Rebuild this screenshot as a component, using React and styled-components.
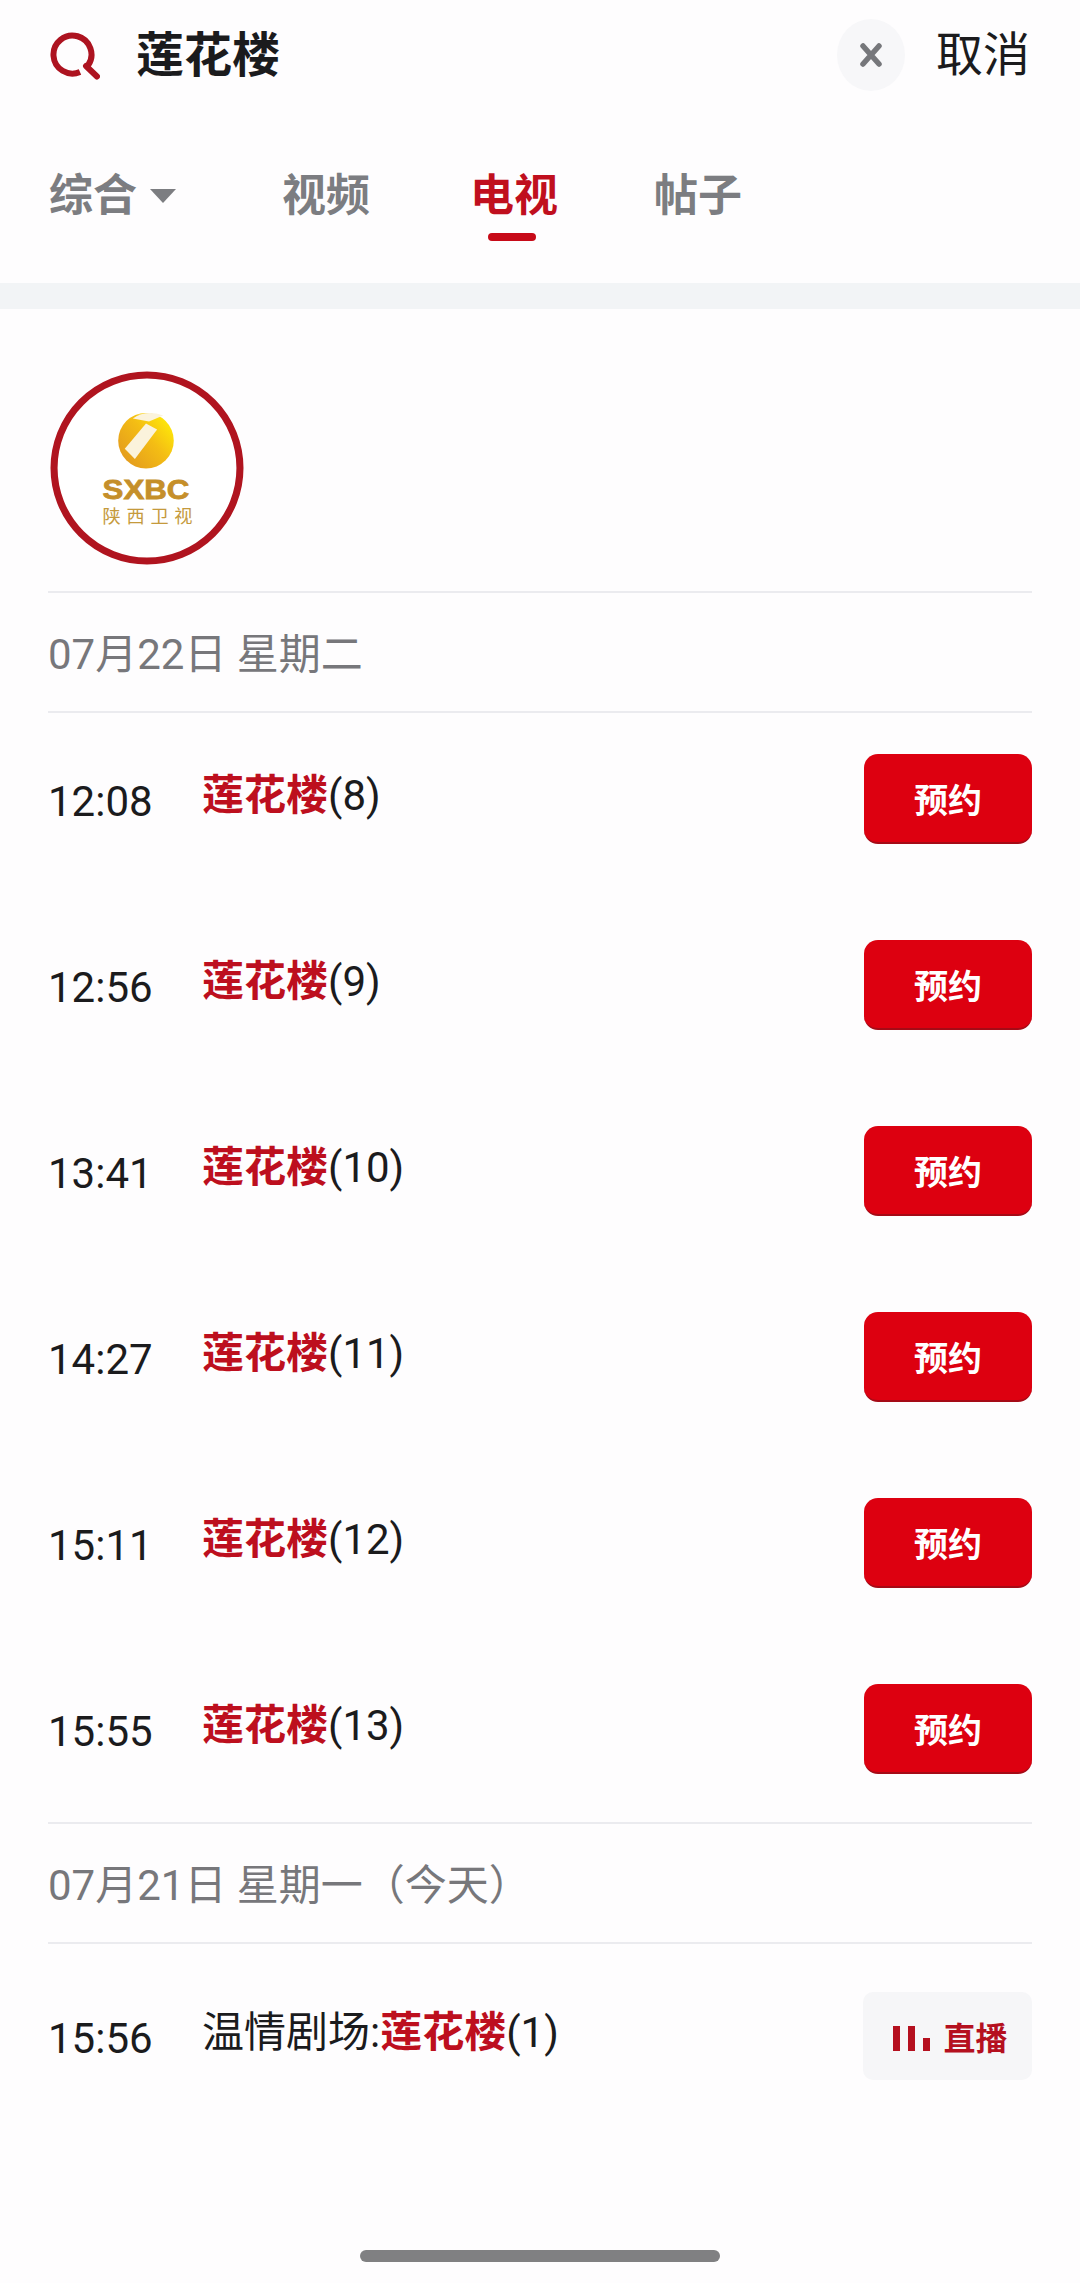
import React from "react";
import styled, { createGlobalStyle } from "styled-components";

const Global = createGlobalStyle`
  html, body { margin: 0; padding: 0; background: #fefdfe; }
  body { font-family: Roboto, "Noto Sans CJK SC", sans-serif; }
`;

const Page = styled.div`
  width: 1080px;
  height: 2283px;
  overflow: hidden;
  display: flex;
  flex-direction: column;
  background: #fefdfe;
`;

const SearchBar = styled.header`
  height: 110px;
  display: flex;
  align-items: center;
  padding: 0 50px;
`;

const SearchIcon = styled.svg`
  width: 50px;
  height: 50px;
  flex: none;
`;

const Query = styled.div`
  margin-left: 36px;
  font-size: 48px;
  line-height: 56px;
  margin-top: 2px;
  font-weight: 700;
  color: #1b1b1d;
  flex: 1;
`;

const ClearButton = styled.div`
  width: 68px;
  height: 72px;
  margin-left: -2px;
  border-radius: 50%;
  background: #f7f7f9;
  display: flex;
  align-items: center;
  justify-content: center;
`;

const Cancel = styled.div`
  margin-left: 31px;
  font-size: 47px;
  line-height: 56px;
  color: #1b1b1d;
`;

const Tabs = styled.nav`
  height: 173px;
  display: flex;
  align-items: flex-start;
  padding: 59px 0 0 49px;
  box-sizing: border-box;
`;

const Tab = styled.div`
  position: relative;
  width: ${(p) => p.$w}px;
  flex: none;
  display: flex;
  align-items: center;
  font-size: 44px;
  line-height: 54px;
  font-weight: 700;
  color: ${(p) => (p.$active ? "#c00f1e" : "#7c7d81")};
`;

const Caret = styled.span`
  margin-left: 13px;
  width: 0;
  height: 0;
  border-left: 13px solid transparent;
  border-right: 13px solid transparent;
  border-top: 14px solid #7c7d81;
`;

const Indicator = styled.span`
  position: absolute;
  left: 18px;
  top: 64px;
  width: 48px;
  height: 8px;
  border-radius: 4px;
  background: #c70a18;
`;

const Band = styled.div`
  height: 26px;
  background: #f2f4f6;
`;

const Content = styled.main`
  flex: 1;
  padding: 0 48px;
  display: flex;
  flex-direction: column;
`;

const LogoRow = styled.div`
  padding: 62px 0 26px 2px;
  border-bottom: 2px solid #ebebef;
`;

const Logo = styled.svg`
  display: block;
  width: 194px;
  height: 194px;
`;

const DateRow = styled.div`
  height: 120px;
  box-sizing: border-box;
  display: flex;
  align-items: center;
  padding-bottom: 4px;
  font-size: 42px;
  color: #77777b;
  border-bottom: 2px solid #ebebef;
`;

const Schedule = styled.div`
  display: flex;
  flex-direction: column;
  gap: 96px;
  padding: ${(p) => p.$top}px 0 ${(p) => p.$bottom}px;
  border-bottom: ${(p) => (p.$line ? "2px solid #ebebef" : "none")};
`;

const Row = styled.div`
  height: ${(p) => p.$h || 90}px;
  display: flex;
  align-items: center;
`;

const Time = styled.div`
  width: 155px;
  flex: none;
  font-size: 42px;
  line-height: 50px;
  margin-top: 6px;
  color: #1b1b1d;
`;

const Title = styled.div`
  flex: 1;
  font-size: 42px;
  line-height: 50px;
  margin-top: -7px;
  margin-left: -1px;
  color: #1b1b1d;
`;

const Mark = styled.span`
  font-weight: 700;
  color: #bd0f1e;
`;

const BookButton = styled.div`
  width: 168px;
  height: 90px;
  box-sizing: border-box;
  border-radius: 14px;
  background: #dd0010;
  border-bottom: 2px solid #a50a16;
  color: #fff;
  font-size: 34px;
  font-weight: 700;
  display: flex;
  align-items: center;
  justify-content: center;
`;

const LiveButton = styled.div`
  width: 169px;
  height: 88px;
  box-sizing: border-box;
  padding-left: 6px;
  border-radius: 10px;
  background: #f6f6f8;
  color: #b5101f;
  font-size: 32px;
  font-weight: 700;
  display: flex;
  align-items: center;
  justify-content: center;
  gap: 13px;
`;

const LiveBars = styled.div`
  display: flex;
  align-items: flex-end;
  gap: 8px;
  height: 25px;
  margin-top: 4px;
`;

const LiveBar = styled.span`
  width: 7px;
  height: ${(p) => p.$h}px;
  background: #b5101f;
`;

const HomeBarWrap = styled.div`
  display: flex;
  justify-content: center;
  padding-bottom: 21px;
`;

const HomeBar = styled.div`
  width: 360px;
  height: 12px;
  border-radius: 6px;
  background: #808082;
`;

const items = [
  ["12:08", "(8)"],
  ["12:56", "(9)"],
  ["13:41", "(10)"],
  ["14:27", "(11)"],
  ["15:11", "(12)"],
  ["15:55", "(13)"],
];

export default function App() {
  return (
    <Page>
      <Global />
      <SearchBar>
        <SearchIcon viewBox="0 0 50 50">
          <path
            d="M30 42 A19 19 0 1 1 38 35.5"
            fill="none"
            stroke="#ad1320"
            strokeWidth="6"
          />
          <path d="M36 36 L47 46.5" fill="none" stroke="#ad1320" strokeWidth="6" strokeLinecap="round" />
        </SearchIcon>
        <Query>莲花楼</Query>
        <ClearButton>
          <svg width="26" height="26" viewBox="0 0 26 26">
            <path d="M5 4 L21 22 M21 4 L5 22" stroke="#76777b" strokeWidth="5.5" strokeLinecap="round" />
          </svg>
        </ClearButton>
        <Cancel>取消</Cancel>
      </SearchBar>
      <Tabs>
        <Tab $w={233}>
          综合
          <Caret />
        </Tab>
        <Tab $w={188}>视频</Tab>
        <Tab $w={184} $active>
          电视
          <Indicator />
        </Tab>
        <Tab $w={100}>帖子</Tab>
      </Tabs>
      <Band />
      <Content>
        <LogoRow>
          <Logo viewBox="0 0 192 192">
            <defs>
              <linearGradient id="sun" x1="0.1" y1="0.9" x2="0.9" y2="0.2">
                <stop offset="0" stopColor="#e39a1e" />
                <stop offset="0.6" stopColor="#f4bd14" />
                <stop offset="1" stopColor="#fde40a" />
              </linearGradient>
            </defs>
            <circle cx="96" cy="96" r="92" fill="#fff" stroke="#b0141f" strokeWidth="7" />
            <circle cx="95" cy="69" r="27.5" fill="url(#sun)" />
            <path d="M74 77 L95 52 L106 58 L84 87 Z" fill="#fbf3dc" />
            <path d="M82 47 Q95 38 112 44 L98 50 Z" fill="#fbf3dc" />
            <text
              x="52"
              y="127"
              fontFamily="Liberation Sans"
              fontWeight="700"
              fontSize="28"
              textLength="86"
              lengthAdjust="spacingAndGlyphs"
              fill="#c58f2a"
              stroke="#c58f2a"
              strokeWidth="0.8"
            >
              SXBC
            </text>
            <text
              x="52"
              y="150"
              fontFamily="Noto Sans CJK SC"
              fontSize="18"
              textLength="89"
              fill="#c59a3c"
            >
              陕西卫视
            </text>
          </Logo>
        </LogoRow>
        <DateRow>07月22日 星期二</DateRow>
        <Schedule $top={41} $bottom={48} $line>
          {items.map(([t, n]) => (
            <Row key={t}>
              <Time>{t}</Time>
              <Title>
                <Mark>莲花楼</Mark>
                {n}
              </Title>
              <BookButton>预约</BookButton>
            </Row>
          ))}
        </Schedule>
        <DateRow>07月21日 星期一（今天）</DateRow>
        <Schedule $top={48} $bottom={0}>
          <Row $h={88}>
            <Time>15:56</Time>
            <Title>
              温情剧场:<Mark>莲花楼</Mark>(1)
            </Title>
            <LiveButton>
              <LiveBars>
                <LiveBar $h={25} />
                <LiveBar $h={25} />
                <LiveBar $h={13} />
              </LiveBars>
              直播
            </LiveButton>
          </Row>
        </Schedule>
      </Content>
      <HomeBarWrap>
        <HomeBar />
      </HomeBarWrap>
    </Page>
  );
}
